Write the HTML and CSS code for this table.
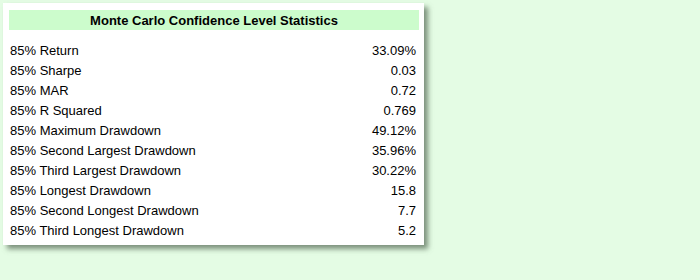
FILE: index.html
```html
<!DOCTYPE html>
<html>
<head>
<meta charset="utf-8">
<link rel="stylesheet" href="styles.css">
</head>
<body>
<div class="card">
  <div class="title">Monte Carlo Confidence Level Statistics</div>
  <div class="rows">
    <div class="row"><span>85% Return</span><span>33.09%</span></div>
    <div class="row"><span>85% Sharpe</span><span>0.03</span></div>
    <div class="row"><span>85% MAR</span><span>0.72</span></div>
    <div class="row"><span>85% R Squared</span><span>0.769</span></div>
    <div class="row"><span>85% Maximum Drawdown</span><span>49.12%</span></div>
    <div class="row"><span>85% Second Largest Drawdown</span><span>35.96%</span></div>
    <div class="row"><span>85% Third Largest Drawdown</span><span>30.22%</span></div>
    <div class="row"><span>85% Longest Drawdown</span><span>15.8</span></div>
    <div class="row"><span>85% Second Longest Drawdown</span><span>7.7</span></div>
    <div class="row"><span>85% Third Longest Drawdown</span><span>5.2</span></div>
  </div>
</div>
</body>
</html>
```
FILE: styles.css
```css
html, body {
  margin: 0;
  padding: 0;
  background: #e4fce4;
  width: 700px;
  height: 280px;
  overflow: hidden;
}
body {
  font-family: "Liberation Sans", Arial, sans-serif;
  font-size: 13px;
  color: #000;
}
.card {
  margin: 3px 0 0 3px;
  width: 421px;
  height: 242px;
  box-sizing: border-box;
  background: #fff;
  padding: 7px 5px 4px 6px;
  box-shadow: 4px 4px 5px rgba(90, 110, 90, 0.75);
  display: flex;
  flex-direction: column;
}
.title {
  height: 20px;
  line-height: 21px;
  background: #ccfccc;
  text-align: center;
  font-weight: bold;
}
.rows {
  margin-top: 11px;
  display: flex;
  flex-direction: column;
}
.row {
  height: 20px;
  line-height: 20px;
  display: flex;
  justify-content: space-between;
  padding: 0 3px 0 1px;
}
```
